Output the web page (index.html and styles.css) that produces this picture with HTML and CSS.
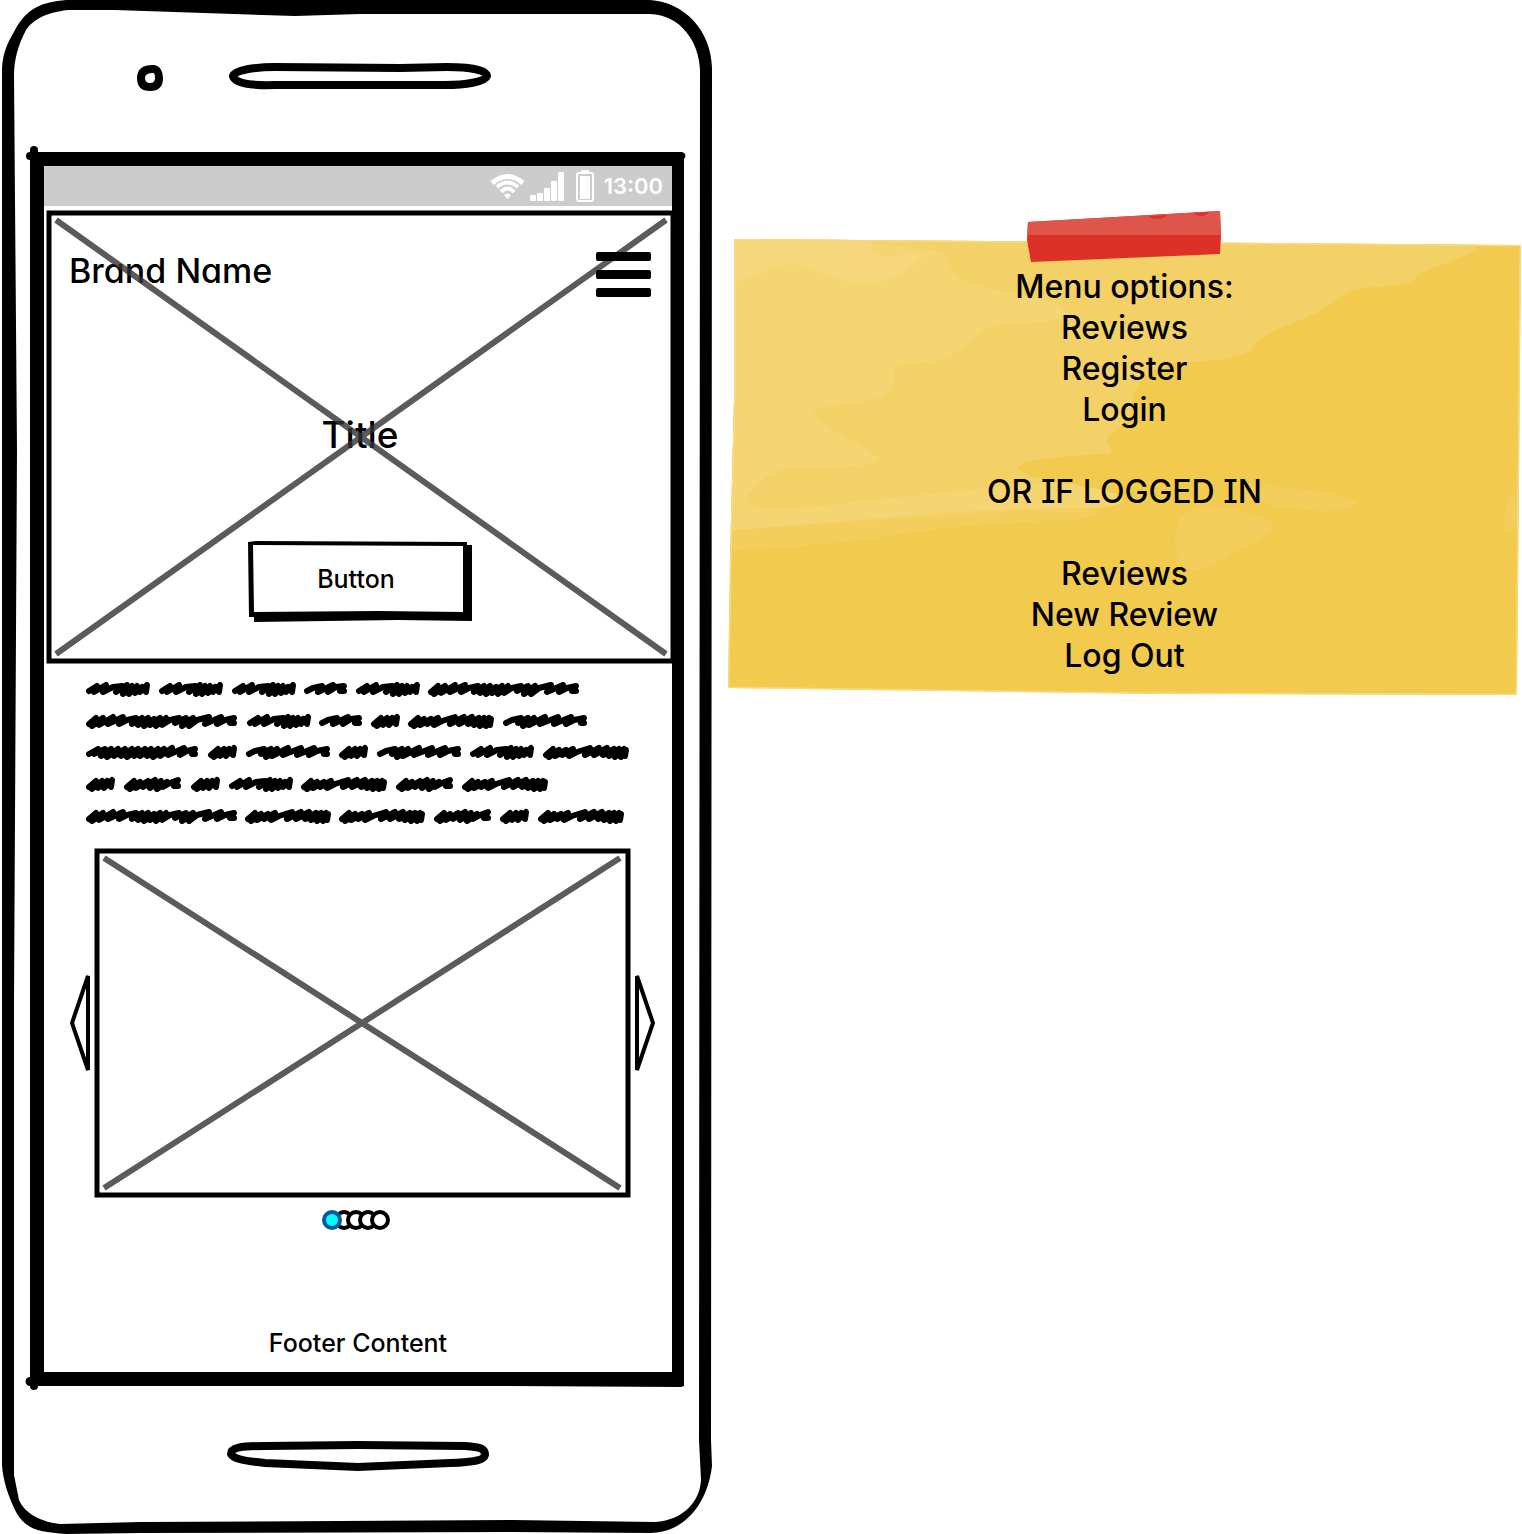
FILE: index.html
```html
<!DOCTYPE html>
<html lang="en">
<head>
<meta charset="utf-8">
<title>Mobile wireframe</title>
<link rel="stylesheet" href="styles.css">
</head>
<body>
<main class="board">
  <section class="phone" aria-label="Phone mockup">
    <svg class="backdrop" viewBox="0 0 712 1534" preserveAspectRatio="none" aria-hidden="true">
      <path fill-rule="evenodd" d="M66 0L650 0C684 2 711 30 712 68L711 1440L712 1466C708 1500 688 1532 650 1533L512 1532L140 1533L66 1534C40 1532 26 1530 16 1512C8 1496 3 1480 2 1465L2 68C3 52 8 42 15 30C27 8 42 2 66 0ZM68 10C45 13 34 19 26 30C18 45 14 60 14 75L17 450L14 1000L14 1475L19 1500C25 1514 42 1522 60 1524L140 1522L512 1520L655 1522C685 1520 700 1500 701 1480L699 1440L700 70C699 42 681 15 650 14L360 14L295 16L115 10Z"/>
      <path fill-rule="evenodd" d="M30 152V150A4 4 0 0 1 38 150V152H682A4 4 0 0 1 684 159V1386L681 1387L500 1386H38A4 4 0 0 1 30 1386A4 4 0 0 1 30 1377V160A4 4 0 0 1 30 152ZM44 166V1372H672V166Z"/>
      <path class="ink" d="M153 69C145 69 141 72 141 78C141 84 144 87 150 87C156 87 159 84 159 78C159 73 157 69 153 69Z"/>
      <path class="ink" d="M233 76C235 70 255 67 275 67L400 68L447 67C470 67 487 70 487 76C485 82 465 85 445 85H275C245 86 234 82 233 76Z"/>
      <path class="ink" d="M231 1454C231 1448 240 1446 265 1446L358 1445L465 1446C482 1447 485 1449 485 1455C484 1460 475 1462 450 1463L358 1467L265 1463C242 1461 233 1458 231 1454Z"/>
    </svg>

    <div class="status">
      <svg width="35" height="26" viewBox="0 0 35 26" aria-hidden="true">
        <g fill="none" stroke="#fff">
          <path stroke-width="5" d="M2 10Q17.500 -3 33 10"/>
          <path stroke-width="4" d="M7 14Q17.500 5 28 14"/>
          <path stroke-width="4" d="M11 19Q17.500 12 24 19"/>
        </g>
        <path fill="#fff" d="M14 22Q17.500 19 21 22L17.500 26Z"/>
      </svg>
      <svg class="signal" width="34" height="30" viewBox="0 0 34 30" fill="#fff" aria-hidden="true">
        <rect y="24" width="6" height="6" rx="1"/><rect x="7" y="22" width="6" height="8" rx="1"/><rect x="14" y="17" width="6" height="13" rx="1"/><rect x="21" y="10" width="6" height="20" rx="1"/><rect x="28" y="1" width="6" height="29" rx="1"/>
      </svg>
      <svg class="battery" width="18" height="32" viewBox="0 0 18 32" aria-hidden="true">
        <rect x="1" y="3" width="16" height="28" rx="2" fill="none" stroke="#fff" stroke-width="2"/>
        <rect x="5" width="8" height="4" rx="1" fill="#fff"/><rect x="4" y="6" width="10" height="23" fill="#fff"/>
      </svg>
      <time>13:00</time>
    </div>

    <section class="hero">
      <svg class="backdrop cross" viewBox="0 0 628 453" preserveAspectRatio="none" aria-hidden="true">
        <rect class="edge" x="2" y="3" width="624" height="448"/>
        <path d="M9 10L619 444M619 10L9 444"/>
      </svg>
      <header class="bar">
        <a class="brand" href="#">Brand Name</a>
        <button class="burger" aria-label="Menu"><i></i><i></i><i></i></button>
      </header>
      <h1>Title</h1>
      <button class="cta">
        <svg class="backdrop" viewBox="0 0 224 80" preserveAspectRatio="none" aria-hidden="true">
          <path fill-rule="evenodd" d="M0 1L8 0L219 1V4H224V80L150 79L6 81V76H1ZM5 4L6 71L130 70L215 71V5Z"/>
        </svg>
        <span>Button</span>
      </button>
    </section>

    <svg class="scribble" viewBox="0 0 544 142" role="img" aria-label="Placeholder text">
      <defs>
        <path id="w64" d="M3 9L11 4L8 10L20 3L17 10L27 5L36 4L30 10L41 3L37 12L46 4L43 12L51 4L49 11L56 5L54 10L61 3L60 10"/>
        <path id="w43" d="M3 9L9 6L18 4L14 10L29 3L24 10L32 5L40 4L36 9L40 9"/>
        <path id="w29" d="M3 10L10 4L6 12L16 4L12 11L21 4L18 11L26 3L25 10"/>
        <path id="w86" d="M3 10L10 4L6 12L16 5L12 11L23 5L19 10L30 4L26 11L34 7L47 3L42 10L56 3L51 10L64 3L60 10L71 4L66 11L76 4L72 12L81 4L78 12L83 5L82 11"/>
        <path id="w85" d="M3 9L9 6L18 4L15 9L25 4L20 12L31 4L26 11L42 3L37 10L55 3L51 10L68 3L63 10L71 6L81 4L78 9L81 9"/>
        <path id="w58" d="M3 10L10 4L6 12L16 5L12 11L24 4L19 10L31 3L26 11L37 4L33 12L43 5L39 10L46 6L54 3L50 9L54 9"/>
        <path id="w113" d="M3 9L12 4L8 9L19 4L15 11L25 4L21 12L32 4L28 11L39 4L35 11L46 4L41 12L52 4L48 11L59 4L54 11L65 4L61 11L72 4L67 12L78 4L74 11L86 3L82 10L98 3L94 10L101 6L109 4L106 9L109 9"/>
        <path id="w152" d="M3 10L10 4L6 12L17 4L13 11L27 3L22 10L37 3L33 10L41 6L50 4L46 10L56 4L52 11L62 4L58 12L68 5L64 11L74 4L70 12L80 4L76 11L84 6L93 4L89 9L100 4L96 12L107 4L103 12L111 6L123 3L119 10L135 3L131 10L139 6L148 4L144 9L148 9"/>
      </defs>
      <use href="#w64"/><use href="#w64" x="73"/><use href="#w64" x="146"/><use href="#w43" x="218"/><use href="#w64" x="270"/><use href="#w152" x="342"/>
      <g transform="translate(0 32)"><use href="#w152"/><use href="#w64" x="161"/><use href="#w43" x="233"/><use href="#w29" x="285"/><use href="#w86" x="322"/><use href="#w85" x="417"/></g>
      <g transform="translate(0 63)"><use href="#w113"/><use href="#w29" x="122"/><use href="#w85" x="160"/><use href="#w29" x="253"/><use href="#w85" x="291"/><use href="#w64" x="384"/><use href="#w86" x="457"/></g>
      <g transform="translate(0 95)"><use href="#w29"/><use href="#w58" x="38"/><use href="#w29" x="105"/><use href="#w64" x="143"/><use href="#w86" x="215"/><use href="#w58" x="310"/><use href="#w86" x="376"/></g>
      <g transform="translate(0 127)"><use href="#w152"/><use href="#w86" x="159"/><use href="#w86" x="253"/><use href="#w58" x="348"/><use href="#w29" x="414"/><use href="#w86" x="452"/></g>
    </svg>

    <section class="carousel" aria-label="Carousel">
      <button aria-label="Previous"><svg width="20" height="98" viewBox="0 0 20 98"><path d="M18 2V96L2 49Z"/></svg></button>
      <div class="slide">
        <svg class="backdrop cross" viewBox="0 0 535 349" preserveAspectRatio="none" aria-hidden="true">
          <rect class="edge" x="2" y="3" width="531" height="344"/>
          <path d="M9 10L525 340M525 10L9 340"/>
        </svg>
      </div>
      <button aria-label="Next"><svg width="20" height="98" viewBox="0 0 20 98"><path d="M2 2V96L18 49Z"/></svg></button>
    </section>
    <div class="dots">
      <button class="current" aria-label="Slide 1"></button><button aria-label="Slide 2"></button><button aria-label="Slide 3"></button><button aria-label="Slide 4"></button><button aria-label="Slide 5"></button>
    </div>
    <footer>Footer Content</footer>
  </section>

  <aside class="note">
    <svg class="backdrop" viewBox="728 210 793 486" preserveAspectRatio="none" aria-hidden="true">
      <clipPath id="paper"><path d="M734 239L860 240L1521 245L1519 480L1517 695L1160 694L728 688L730 560L734 400Z"/></clipPath>
      <g clip-path="url(#paper)">
        <rect x="728" y="210" width="793" height="486" fill="#f2ca4d"/>
        <path fill="#f3ce5d" d="M728 500L1105 495C1100 511 1098 518 1080 519C1030 521 990 524 945 528C860 540 800 549 728 550Z"/>
        <path fill="#f3d166" d="M728 230H1475V248C1472 258 1428 266 1416 277C1409 291 1360 282 1345 295C1330 304 1320 313 1298 321C1270 331 1256 341 1254 348C1243 360 1200 362 1172 363C1142 373 1132 388 1132 410C1127 430 1107 431 1107 442C1109 450 1117 452 1105 454C1070 455 1020 460 1018 467C1018 475 1050 481 1075 485V507L728 530Z"/>
        <path fill="#f5d472" d="M728 239H840C880 246 940 248 945 254C951 266 945 275 982 287C1010 294 1066 300 1067 313C1060 327 1005 320 991 326C975 334 964 352 942 359C922 365 897 361 895 370C893 388 895 392 880 398C850 405 810 406 814 414C825 430 865 443 880 459C875 471 800 465 780 470C765 475 747 492 747 500C750 515 820 506 850 502L985 488C1020 485 1060 479 1080 486C1115 491 1128 498 1120 503C1110 512 1060 505 950 512C860 520 780 526 735 530H728Z"/>
        <path fill="#f3d166" d="M747 500C747 492 765 475 780 470C800 465 875 471 880 459L1018 467L985 488L850 502C820 506 750 515 747 500Z"/>
        <path fill="#f6d87c" d="M728 239H860L872 244V251C881 261 895 256 908 253C921 250 924 254 920 258C902 275 885 284 865 283C835 282 815 266 795 265C775 264 755 275 728 286Z"/>
        <path fill="#f3ce5d" d="M1209 507C1240 508 1274 520 1274 525C1271 537 1245 546 1225 558C1210 565 1200 574 1189 569C1176 564 1175 550 1175 540C1176 515 1187 507 1209 507ZM1240 487C1290 484 1355 495 1357 503C1354 508 1330 512 1320 511C1290 509 1260 503 1240 498ZM1514 493C1522 505 1518 532 1508 532C1501 528 1503 500 1514 493Z"/>
        <path fill="none" stroke="#f6da80" stroke-width="3" d="M734 239L860 240L1521 245L1519 480L1517 695L1160 694L728 688L730 560L734 400Z"/>
      </g>
      <path fill="#dd3128" d="M1028 222L1220 211L1221 236L1220 254L1031 262L1027 240Z"/>
      <path fill="#de554b" d="M1028 222L1220 211L1221 235H1027Z"/>
      <path fill="#dd3128" d="M1149 216L1167 215C1164 220 1151 220 1149 216ZM1194 213L1209 212C1206 217 1196 217 1194 213Z"/>
    </svg>
    <h2>Menu options:</h2>
    <ul><li>Reviews</li><li>Register</li><li>Login</li></ul>
    <p>OR IF LOGGED IN</p>
    <ul><li>Reviews</li><li>New Review</li><li>Log Out</li></ul>
  </aside>
</main>
</body>
</html>
```
FILE: styles.css
```css
* { box-sizing: border-box; }
body {
  margin: 0;
  background: #fff;
  color: #000;
  font-family: Inter, "Liberation Sans", sans-serif;
  font-weight: 500;
  font-feature-settings: "cv11", "cv08";
}
button {
  padding: 0;
  border: 0;
  background: none;
  color: inherit;
  font: inherit;
  font-feature-settings: inherit;
}
h1, h2, p, ul { margin: 0; padding: 0; font-weight: 500; }
ul { list-style: none; }
svg { display: block; }

.board {
  display: grid;
  grid-template-columns: minmax(0, 712fr) minmax(0, 793fr);
  align-items: start;
  gap: 16px;
  padding-right: 1px;
}
.backdrop { position: absolute; inset: 0; width: 100%; height: 100%; overflow: visible; }

.phone { position: relative; padding: 166px 40px 162px 44px; }
.ink { fill: none; stroke: #000; stroke-width: 8; }

.status {
  position: relative;
  display: flex;
  align-items: center;
  justify-content: flex-end;
  height: 40px;
  padding-right: 9px;
  background: #ccc;
  color: #fff;
  font-size: 22px;
  font-weight: 600;
}
.signal { margin: 0 12px 0 5px; }
.battery { margin-right: 10px; }

.hero {
  position: relative;
  display: flex;
  flex-direction: column;
  align-items: center;
  margin: 4px -3px 0 3px;
  padding: 40px 24px 42px 22px;
}
.cross { z-index: 1; pointer-events: none; fill: none; stroke: rgba(50, 50, 52, .8); stroke-width: 6; }
.cross .edge { stroke: #000; stroke-width: 5; }
.bar { display: flex; justify-content: space-between; align-self: stretch; height: 48px; }
.brand { color: inherit; font-size: 34px; line-height: 42px; text-decoration: none; }
.burger { position: relative; z-index: 2; display: grid; gap: 9px; align-self: center; width: 55px; }
.burger i { height: 9px; border-radius: 2px; background: #000; }
h1 { margin-top: 114px; font-size: 37px; line-height: 46px; }
.cta { position: relative; width: 224px; height: 80px; margin-top: 83px; padding: 0 8px 4px 0; font-size: 25px; }
.cta span { position: relative; }

.scribble {
  position: relative;
  width: calc(100% - 84px);
  margin: 19px 42px 0;
  fill: none;
  stroke: #000;
  stroke-width: 6;
  stroke-linecap: round;
  stroke-linejoin: round;
}

.carousel { position: relative; display: flex; align-items: center; gap: 5px; margin: 24px 17px 0 26px; }
.carousel button { flex: none; }
.carousel button path { fill: #fff; stroke: #000; stroke-width: 4; }
.slide { position: relative; flex: 1; height: 349px; }

.dots { position: relative; display: flex; justify-content: center; margin: 13px 4px 0 0; }
.dots button {
  width: 20px;
  height: 20px;
  border: 4px solid #000;
  border-radius: 50%;
  background: #fff;
}
.dots button + button { margin-left: -8px; }
.dots .current { position: relative; z-index: 1; border-color: #0b57a0; background: #0ff; }

footer { position: relative; margin-top: 98px; padding-bottom: 14px; font-size: 25px; line-height: 30px; text-align: center; }

.note {
  position: relative;
  margin-top: 210px;
  padding: 56px 0 20px;
  font-size: 32px;
  line-height: 41px;
  text-align: center;
}
.note h2 { font-size: inherit; }
.note p { margin: 41px 0; }
.note > :not(.backdrop) { position: relative; }
```
